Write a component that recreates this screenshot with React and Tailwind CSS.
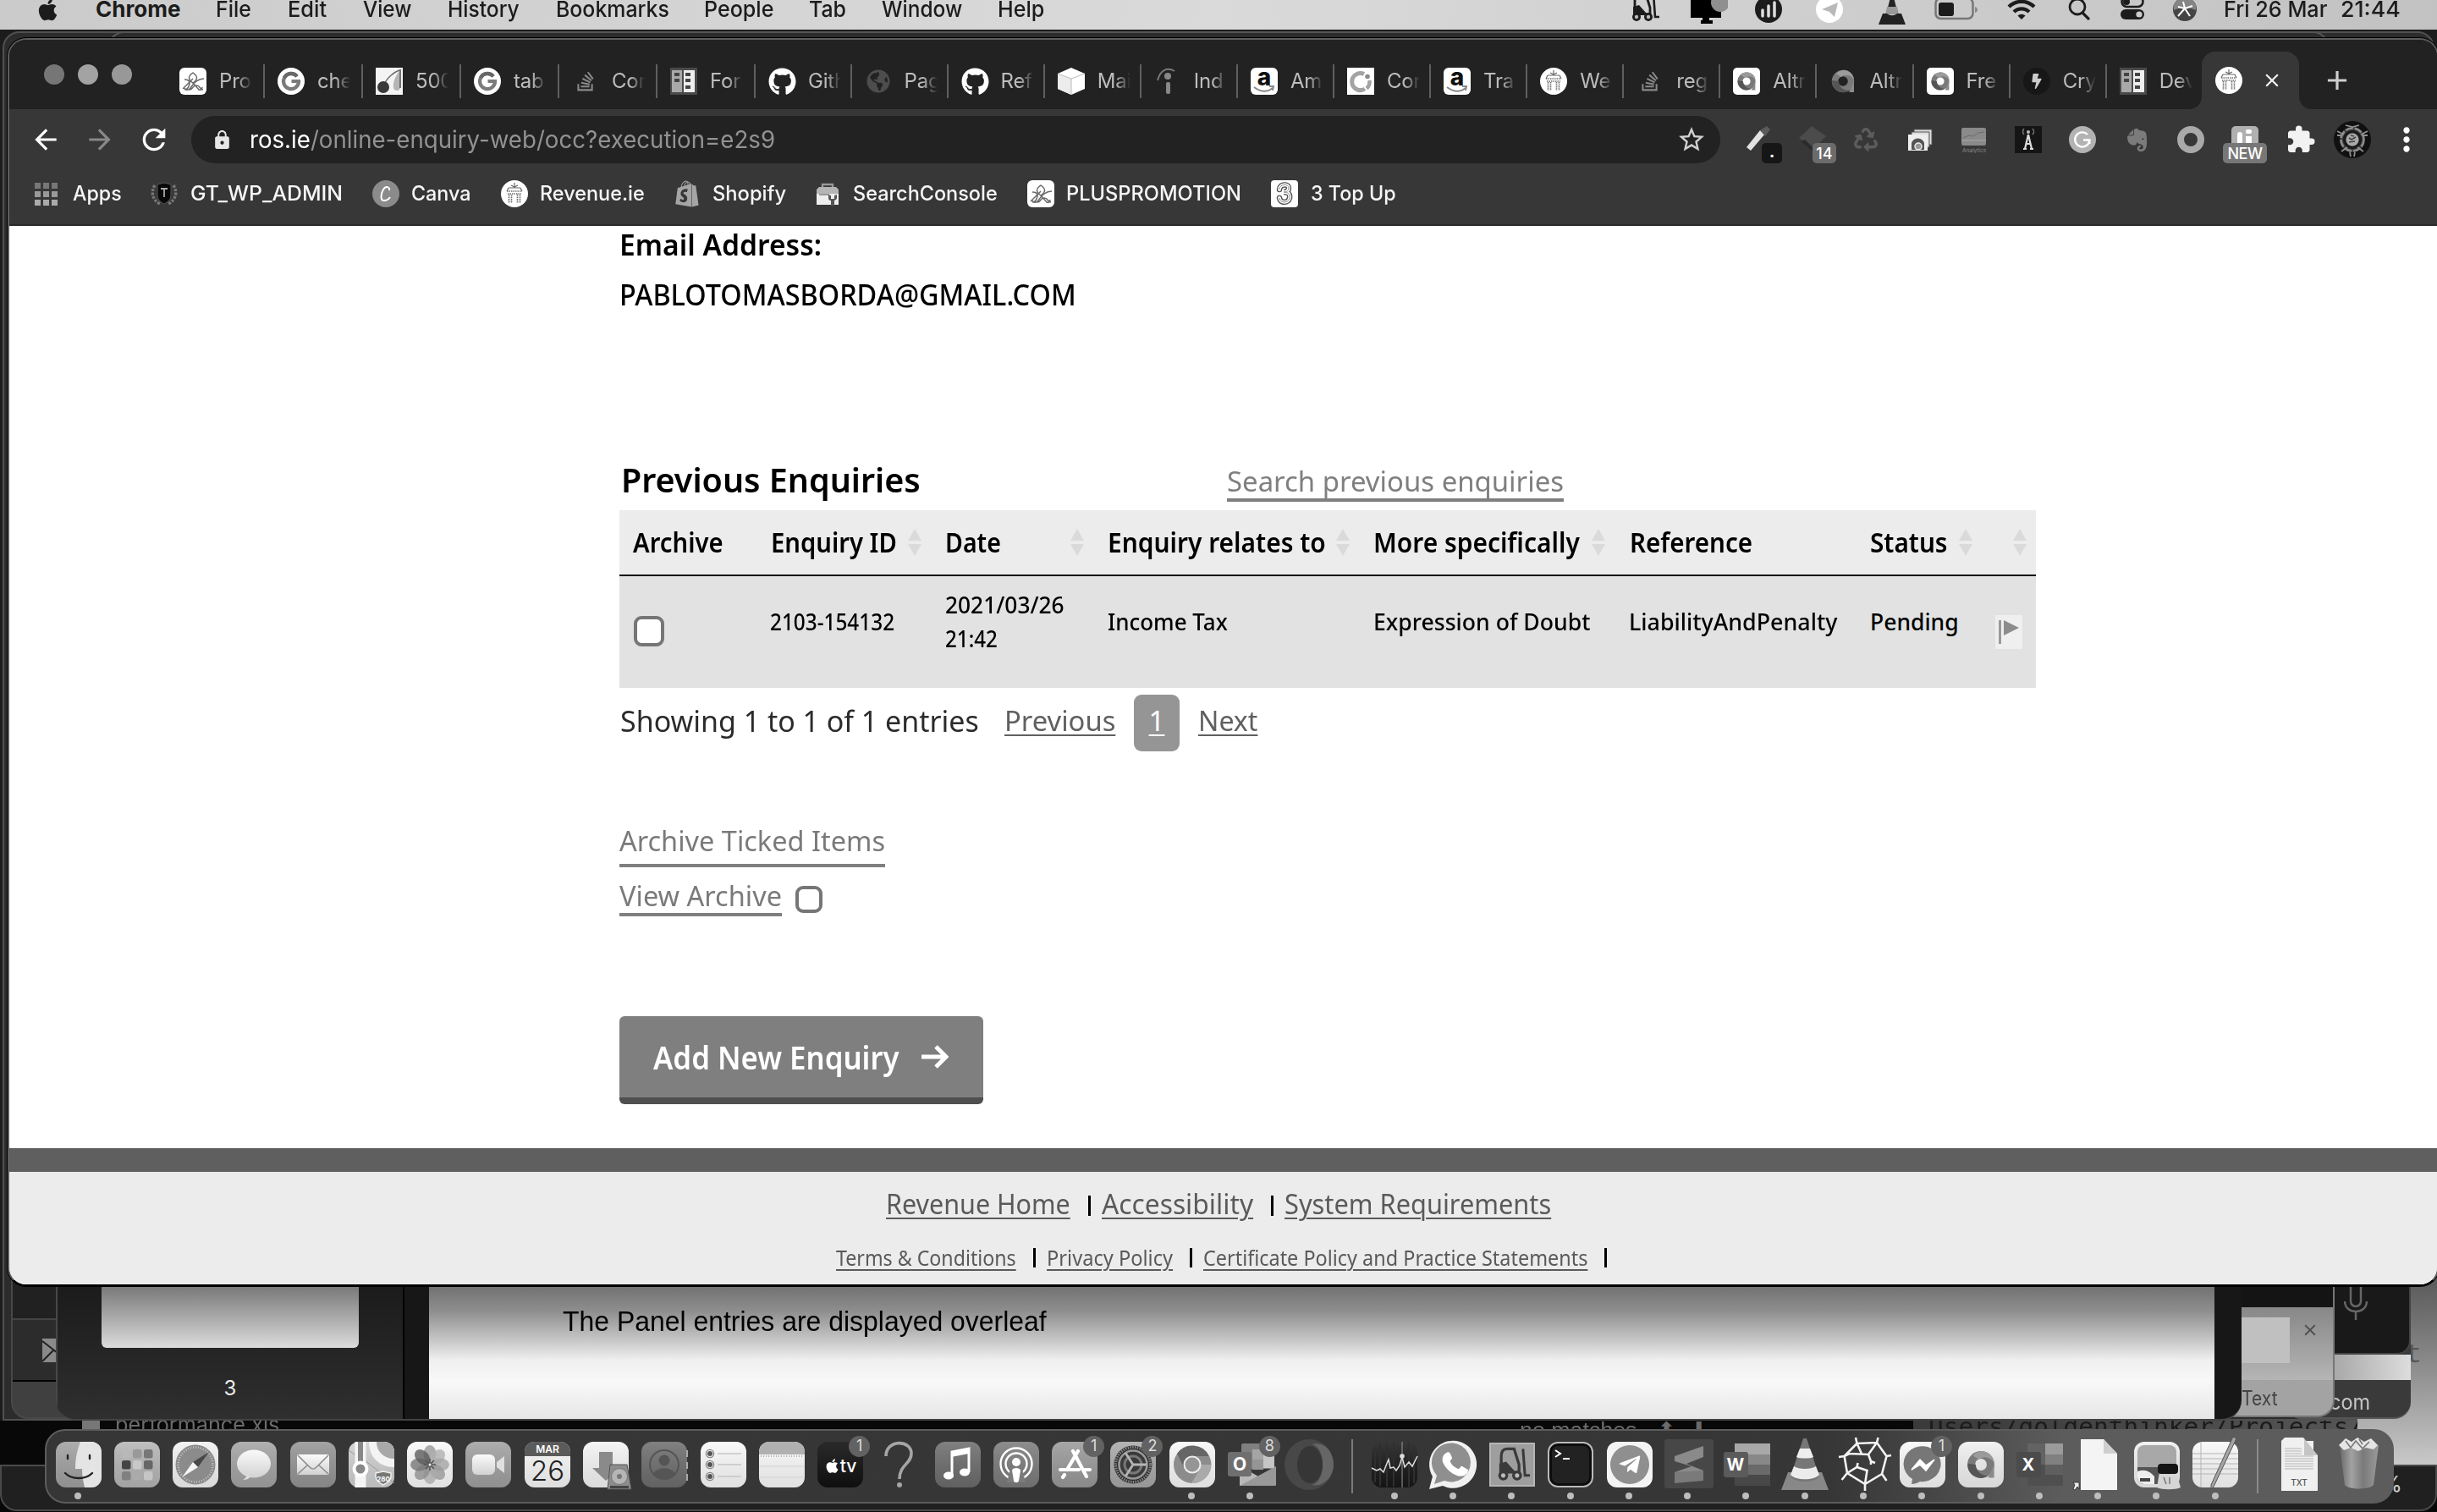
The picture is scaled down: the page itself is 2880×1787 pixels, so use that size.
import React, { useLayoutEffect, useRef, useState } from "react";
import { FaApple, FaGithub, FaStackOverflow, FaTelegramPlane, FaEvernote, FaRecycle, FaShopify, FaBolt, FaGlobeAmericas, FaMusic } from "react-icons/fa";
import { MdArrowBack, MdArrowForward, MdRefresh, MdLock, MdStarBorder, MdExtension, MdMoreVert, MdClose, MdAdd, MdWifi } from "react-icons/md";

/* Text run stretched horizontally to a given width. */
function Fit({ w, className = "", line = "", children }) {
  const ref = useRef(null);
  const [s, setS] = useState(1);
  useLayoutEffect(() => {
    if (ref.current && ref.current.offsetWidth) setS(w / ref.current.offsetWidth);
  }, [w]);
  return (
    <span className={"block shrink-0 whitespace-pre " + className} style={{ width: w }}>
      <span ref={ref} className={"inline-block origin-left whitespace-pre align-top " + line} style={{ transform: `scaleX(${s})` }}>
        {children}
      </span>
    </span>
  );
}
const UL = "underline decoration-2 underline-offset-4";

const Svg = ({ w = 32, h = 32, vb = "0 0 32 32", className = "", children }) => (
  <svg width={w} height={h} viewBox={vb} fill="none" className={"block shrink-0 " + className}>
    {children}
  </svg>
);

/* ---------- favicons ---------- */
const Knot = () => (
  <Svg>
    <rect width="32" height="32" rx="6" fill="#fff" />
    <path d="M16 6c6 4 6 8 0 12-6-4-6-8 0-12z" stroke="#6a6a6a" strokeWidth="1.5" />
    <path d="M4 25l12-12M6 26c3 0 5-3 6-7s-3-5-6-5M16 18l7 8c2 1 4-1 4-3M29 13c-7 0-11 4-16 11-2 3-6 3-7 0M12 26c4 0 3-5 8-5s4 5 8 5" stroke="#6a6a6a" strokeWidth="1.5" />
  </Svg>
);
const Google = () => (
  <Svg>
    <circle cx="16" cy="16" r="16" fill="#fff" />
    <path d="M23 10.500A9 9 0 1 0 25 16h-8.500" stroke="#7b7b7b" strokeWidth="4.2" />
    <path d="M8 12A9 9 0 0 1 23 10" stroke="#686868" strokeWidth="4.2" />
  </Svg>
);
const Cherry = () => (
  <Svg>
    <rect width="32" height="32" fill="#f4f4f4" />
    <path d="M28 3C22 5 13 12 10 20" stroke="#666" strokeWidth="1.4" />
    <circle cx="9" cy="23" r="7" fill="#3a3a3a" />
    <path d="M28 4c-6 7-9 17-6 22 3 2 7 1 7-3z" fill="#b5b5b5" />
    <path d="M29 2v22" stroke="#555" strokeWidth="1.6" />
  </Svg>
);
const Books = () => (
  <Svg>
    <rect width="32" height="32" fill="#4a4a4a" />
    <path d="M2 3h12v26H2z" fill="#a9a9a9" />
    <path d="M16 3h13v26H16z" fill="#eee" />
    <path d="M5 6h6v4H5zM5 13h6v4H5zM18 6h6v4h-6zM18 13h6v4h-6zM18 21h6v4h-6z" fill="#444" />
  </Svg>
);
const Cube = () => (
  <Svg>
    <path d="M16 0l16 7v18l-16 7-16-7V7z" fill="#fff" />
    <path d="M0 7l16 6v19L0 25z" fill="#ececec" />
    <path d="M0 7l16 6 16-6M16 13v19" stroke="#bbb" strokeWidth="1" />
  </Svg>
);
const Indeed = () => (
  <Svg>
    <circle cx="16" cy="10" r="4" fill="#888" />
    <rect x="14" y="17" width="5" height="14" rx="2" fill="#888" />
    <path d="M4 15C7 3 15-1 24 4" stroke="#777" strokeWidth="2" />
  </Svg>
);
const Amz = () => (
  <Svg>
    <rect width="32" height="32" rx="6" fill="#fff" />
    <text x="16" y="21" textAnchor="middle" fontFamily="Inter, sans-serif" fontWeight="800" fontSize="28" fill="#111">a</text>
    <path d="M4 23c8 6 16 6 22 1M22 22l5 0-1 5" stroke="#8a8a8a" strokeWidth="2" />
  </Svg>
);
const Coin = () => (
  <Svg>
    <rect width="32" height="32" fill="#fff" />
    <path d="M20 7.500A10 10 0 1 0 21 25" stroke="#a3a3a3" strokeWidth="5" />
    <circle cx="24" cy="10.500" r="2.800" fill="#8a8a8a" />
    <path d="M26.500 15c.5 4-.5 7-3.500 9.500" stroke="#a3a3a3" strokeWidth="4.500" />
  </Svg>
);
const Revenue = () => (
  <Svg>
    <circle cx="16" cy="16" r="16" fill="#fff" />
    <path d="M16 3v6M12 6l4 2 4-2M9 9l-2 4M23 9l2 4M9 9h14" stroke="#6b6b6b" strokeWidth="1.2" />
    <path d="M7 13h18M8 16h16" stroke="#6b6b6b" strokeWidth="1.4" strokeDasharray="1.5 1" />
    <path d="M9.500 17v10M12.500 17v10M19.500 17v10M22.500 17v10" stroke="#6b6b6b" strokeWidth="1.6" strokeDasharray="1.6 .8" />
  </Svg>
);
const RingArt = () => (
  <>
    <circle cx="16" cy="16" r="9.500" stroke="#7a7a7a" strokeWidth="7.500" />
    <path d="M8 7a12 12 0 0 1 21 9c0-6-10-10-15-5z" fill="#9b9b9b" />
    <path d="M3 15a13 13 0 0 0 20 12c-6 0-12-4-12-11z" fill="#555" />
    <path d="M29 16v13h-6z" fill="#8a8a8a" />
  </>
);
const Ring = ({ bg }) => (
  <Svg>
    {bg && <rect width="32" height="32" rx="5" fill="#fff" />}
    <g transform={bg ? "translate(16 16) scale(.8) translate(-16 -16)" : undefined}><RingArt /></g>
  </Svg>
);
const Bolt = () => (
  <span className="flex h-8 w-8 items-center justify-center rounded-full bg-[#171717]">
    <FaBolt size={18} color="#ccc" />
  </span>
);
const Stack = () => (
  <span className="flex h-8 w-8 items-center justify-center">
    <FaStackOverflow size={26} color="#8a8a8a" />
  </span>
);
const Git = () => <FaGithub size={33} color="#fff" />;
const Globe = () => (
  <span className="flex h-8 w-8 items-center justify-center">
    <FaGlobeAmericas size={28} color="#4d4d4d" />
  </span>
);

const TABS = [
  [Knot, "Pro", 116], [Google, "che", 116], [Cherry, "500", 116], [Google, "tab", 116], [Stack, "Cor", 116], [Books, "For", 116],
  [Git, "Gith", 113.5], [Globe, "Pag", 114.1], [Git, "Ref", 114.1], [Cube, "Mai", 114.1], [Indeed, "Ind", 114.1], [Amz, "Am", 114.1],
  [Coin, "Cor", 114.1], [Amz, "Tra", 114.1], [Revenue, "We", 114.1], [Stack, "reg", 114.1], [() => <Ring bg />, "Altr", 114.1],
  [() => <Ring />, "Altr", 114.1], [() => <Ring bg />, "Fre", 114.1], [Bolt, "Cry", 114.1], [Books, "Dev", 112.5],
];

function TabStrip() {
  return (
    <div className="flex h-[82px] items-end bg-[#222222]">
      <div className="ml-[41px] flex w-[145px] gap-4 pb-[29px]">
        <i className="h-6 w-6 rounded-full bg-[#767676]" />
        <i className="h-6 w-6 rounded-full bg-[#a3a3a3]" />
        <i className="h-6 w-6 rounded-full bg-[#989898]" />
      </div>
      {TABS.map(([Icon, label, w], i) => (
        <div key={i} className="flex h-[68px] shrink-0 items-start" style={{ width: w }}>
          <div className="mt-[15px] flex h-10 w-full items-center pl-[15px]">
            <span className="w-8 shrink-0"><Icon /></span>
            <span className="ml-[15px] w-[39px] overflow-hidden whitespace-nowrap text-[24px] leading-10 tracking-[-0.2px] text-[#bdbdbd] [mask-image:linear-gradient(90deg,#000_55%,transparent)]">{label}</span>
            {i < TABS.length - 1 && <span className="ml-auto h-10 w-[2px] bg-[#5f5f5f]" />}
          </div>
        </div>
      ))}
      <div className="relative flex h-[68px] w-[115px] items-start rounded-t-2xl bg-[#373737] pt-[18px] pl-4">
        <Svg w={16} h={16} vb="0 0 16 16" className="absolute bottom-0 -left-4"><path d="M16 0v16H0c10 0 16-6 16-16z" fill="#373737" /></Svg>
        <Svg w={16} h={16} vb="0 0 16 16" className="absolute -right-4 bottom-0"><path d="M0 0v16h16C6 16 0 10 0 0z" fill="#373737" /></Svg>
        <Revenue />
        <MdClose size={26} color="#f2f2f2" className="mt-[3px] ml-[22px]" />
      </div>
      <MdAdd size={38} color="#cfcfcf" className="mb-[15px] ml-[26px]" />
    </div>
  );
}

/* ---------- toolbar ---------- */
function Extensions() {
  return (
    <>
      <span className="relative ml-[29px] h-8 w-8">
        <Svg><path d="M2 25L18 5l6 4L7 29z" fill="#e2e2e2" /><path d="M18 5l8-5 4 4-6 8z" fill="#5a5a5a" /></Svg>
        <b className="absolute top-5 left-5 flex h-6 w-6 justify-center rounded-[5px] bg-[#161616] text-[20px] leading-5 text-white">.</b>
      </span>
      <span className="relative ml-8 h-8 w-8">
        <Svg><path d="M15 0l17 12-15 15L0 14z" fill="#4b4b4b" /><path d="M2 18l5-2 12 12v4z" fill="#2b2b2b" /></Svg>
        <span className="absolute top-5 left-4 flex h-6 w-7 justify-center rounded-[5px] bg-[#6b6b6b] text-[18px] leading-[26px] font-medium text-white">14</span>
      </span>
      <span className="ml-[31px] flex h-8 w-8 items-center justify-center"><FaRecycle size={28} color="#5c5c5c" /></span>
      <Svg className="ml-8">
        <path d="M9 4h21v18H9z" fill="#ddd" stroke="#555" /><path d="M6 7h21v18H6z" fill="#ddd" stroke="#555" /><path d="M2 10h23v19H2z" fill="#eee" />
        <path d="M6 28v-7a7 6 0 0 1 15 0v7" fill="#555" /><circle cx="14" cy="24" r="4" fill="#999" stroke="#eee" strokeWidth="1.500" />
      </Svg>
      <Svg className="ml-8">
        <rect x="1" y="2" width="29" height="21" rx="2" fill="#8a8a8a" /><path d="M3 14l7-3 5 1 6-4 7-1" stroke="#6b6b6b" /><path d="M1 17h29" stroke="#aaa" />
        <text x="16" y="31" textAnchor="middle" fontSize="6.500" fill="#8a8a8a" fontFamily="Inter">Analytics</text>
      </Svg>
      <Svg className="ml-8">
        <rect width="32" height="32" fill="#151515" /><circle cx="16" cy="7" r="2" fill="#bbb" /><path d="M11 3c-2 2-2 5 0 7M21 3c2 2 2 5 0 7" stroke="#777" strokeWidth="1.500" />
        <path d="M16 10l-4 17M16 10l4 17M10 27h4M18 27h4M13 21h6" stroke="#ddd" strokeWidth="2.200" />
      </Svg>
      <Svg className="ml-8">
        <circle cx="16" cy="16" r="16" fill="#b3b3b3" /><path d="M22 10a8.600 8.600 0 1 0 2.400 6.500H17M24.300 16.500V21" stroke="#fff" strokeWidth="2.400" />
      </Svg>
      <span className="ml-8 flex h-8 w-8 items-center justify-center"><FaEvernote size={31} color="#7b7b7b" /></span>
      <Svg className="ml-8"><circle cx="16" cy="16" r="12" stroke="#a9a9a9" strokeWidth="8" /></Svg>
      <span className="relative ml-8 h-8 w-8">
        <Svg><rect width="32" height="32" rx="5" fill="#b0b0b0" /><rect x="7" y="7" width="6" height="18" rx="3" fill="#fff" /><rect x="17" y="12" width="7" height="12" fill="#fff" /><rect x="17" y="4" width="7" height="5" rx="2" fill="#fff" /></Svg>
        <span className="absolute top-5 -left-[10px] flex h-6 w-[52px] justify-center rounded-[5px] bg-[#777777] text-[18px] leading-[26px] font-medium tracking-tight text-white">NEW</span>
      </span>
      <MdExtension size={36} color="#f2f2f2" className="ml-8 shrink-0" />
      <Svg w={44} h={44} vb="0 0 44 44" className="ml-[21px]">
        <circle cx="22" cy="22" r="22" fill="#101010" /><circle cx="22" cy="22" r="15" fill="#3d3d3d" /><circle cx="22" cy="22" r="13.500" stroke="#8b8b8b" strokeWidth="2.500" strokeDasharray="9 2" /><circle cx="22" cy="22" r="9.500" stroke="#1a1a1a" strokeWidth="3" />
        <circle cx="22" cy="22" r="7.500" fill="#a9a9a9" /><path d="M4 12l8 4M4 17h6M40 12l-8 4M40 17h-6M9 36l7-5M35 36l-7-5M19 37l1 5M25 37l-1 5M14 5l8 2 8-2" stroke="#8f8f8f" strokeWidth="1.800" /><path d="M18 20l3 2 5-3M18 25l7-1M20 17l4 1" stroke="#444" strokeWidth="1.600" />
      </Svg>
      <MdMoreVert size={44} color="#fff" className="ml-5 shrink-0" />
    </>
  );
}

function Toolbar() {
  return (
    <div className="flex h-[72px] items-center bg-[#373737]">
      <MdArrowBack size={38} color="#fff" className="ml-6 shrink-0" />
      <MdArrowForward size={38} color="#888" className="ml-[26px] shrink-0" />
      <MdRefresh size={40} color="#fff" className="ml-[25px] shrink-0" />
      <div className="ml-6 flex h-14 w-[1807px] shrink-0 items-center rounded-full bg-[#222222] pr-4 pl-6">
        <MdLock size={25} color="#e6e6e6" className="shrink-0" />
        <Fit w={621} className="ml-5 text-[28px] leading-[54px] text-[#929292]"><span className="text-white">ros.ie</span>/online-enquiry-web/occ?execution=e2s9</Fit>
        <MdStarBorder size={36} color="#d0d0d0" className="ml-auto shrink-0" />
      </div>
      <Extensions />
    </div>
  );
}

const AppsGrid = () => (
  <Svg w={28} h={28} vb="0 0 28 28">
    {[0, 1, 2].map((r) => [0, 1, 2].map((c) => <rect key={r + "-" + c} x={1 + c * 10} y={1 + r * 10} width="7" height="7" fill={["#777", "#999", "#aaa"][r]} />))}
  </Svg>
);
const Shield = () => (
  <Svg>
    <path d="M5 6c-5 8-3 17 6 22M27 6c5 8 3 17-6 22" stroke="#777" strokeWidth="3.500" strokeDasharray="3 1.500" />
    <path d="M8 5l8-2 8 2v12c0 6-4 9-8 11-4-2-8-5-8-11z" fill="#090909" stroke="#555" />
    <path d="M12 10h8M16 10v10" stroke="#aaa" strokeWidth="1.800" />
  </Svg>
);
const Canva = () => (
  <Svg>
    <circle cx="16" cy="16" r="16" fill="#8b8b8b" />
    <path d="M20 12c1-4-4-6-7-1s-4 13 1 13c3 0 5-1 7-4" stroke="#fff" strokeWidth="2" />
  </Svg>
);
const Console = () => (
  <Svg>
    <path d="M10 9V5h12v4" stroke="#999" strokeWidth="2.400" /><path d="M3 11l3-3h20l3 3v6H3z" fill="#b5b5b5" /><path d="M3 16h26v13H3z" fill="#eee" />
    <path d="M6 16h12v2H6z" fill="#999" /><path d="M17 17v4c0 3 3 3 3 3v6h4v-6s3-1 3-3v-4l-3 1v4h-4v-4z" fill="#555" />
  </Svg>
);
const THREE = "M10 11c0-7 11-7 11-2 0 4-3 5-6 5 5 0 8 2 7 7-1 6-11 7-12 0";
const Three = () => (
  <Svg>
    <rect width="32" height="32" rx="4" fill="#fff" />
    <path d={THREE} stroke="#555" strokeWidth="6.500" strokeLinecap="round" />
    <path d={THREE} stroke="#fff" strokeWidth="3.800" strokeLinecap="round" />
    <path d={THREE} stroke="#888" strokeWidth="1" />
  </Svg>
);
const MARKS = [
  [AppsGrid, 28, "Apps", 18, 58, 34], [Shield, 32, "GT_WP_ADMIN", 15, 180, 35], [Canva, 32, "Canva", 14, 71, 35], [Revenue, 32, "Revenue.ie", 14, 124, 34],
  [() => <FaShopify size={32} color="#a5a5a5" />, 32, "Shopify", 14, 87, 33], [Console, 32, "SearchConsole", 14, 171, 35], [Knot, 32, "PLUSPROMOTION", 14, 207, 35], [Three, 32, "3 Top Up", 15, 101, 0],
];
function Bookmarks() {
  return (
    <div className="flex h-[66px] items-center border-b-2 border-[#292929] bg-[#373737] pb-2 pl-[29px]">
      {MARKS.map(([Icon, iw, t, g, w, after], i) => (
        <div key={i} className="flex items-center" style={{ marginRight: after }}>
          <span className="flex justify-center" style={{ width: iw, marginRight: g }}><Icon /></span>
          <Fit w={w} className="text-[24px] leading-10 font-[450] text-[#f6f6f6]">{t}</Fit>
        </div>
      ))}
    </div>
  );
}

/* ---------- page ---------- */
const Sort = () => (
  <Svg w={16} h={32} vb="0 0 16 32"><path d="M8 0l8 14H0zM8 32l8-14H0z" fill="#dadada" /></Svg>
);
const Head = ({ t, w, tw, sort, pr = 29 }) => (
  <div className="flex h-[76px] shrink-0 items-center justify-between" style={{ width: w, paddingRight: pr }}>
    <Fit w={tw} className="-ml-px text-[32px] leading-[74px] font-semibold">{t}</Fit>
    {sort && <Sort />}
  </div>
);
const Cell = ({ t, w, tw }) => (
  <div className="shrink-0 pt-[34px]" style={{ width: w }}>
    <Fit w={tw} className="-ml-px text-[26.500px] leading-10 font-medium">{t}</Fit>
  </div>
);
const Check = ({ className = "" }) => <span className={"block rounded-[9px] border-[4px] border-[#767676] bg-white " + className} />;

function Page() {
  return (
    <div className="h-[1251px] overflow-hidden bg-white font-['Noto_Sans',sans-serif] text-black">
      <div className="ml-[721px] h-[1090px]">
        <Fit w={239} className="text-[35px] leading-[44px] font-semibold">Email Address:</Fit>
        <Fit w={540} className="mt-[15px] text-[35px] leading-[44px] font-medium">PABLOTOMASBORDA@GMAIL.COM</Fit>
        <div className="mt-[167px] flex h-[60px] pl-[2px]">
          <Fit w={354} className="text-[40px] leading-[60px] font-semibold">Previous Enquiries</Fit>
          <Fit w={398} className="mt-[1px] ml-[362px] h-[55px] border-b-[4px] border-[#7f7f7f] text-[33px] leading-[61px] text-[#7f7f7f]">Search previous enquiries</Fit>
        </div>
        <div className="mt-[6px] w-[1674px]">
          <div className="flex border-b-2 border-[#111] bg-[#ececec] pl-[17px]">
            <Head t="Archive" w={163} tw={107} />
            <Head t="Enquiry ID" w={206} tw={149} sort />
            <Head t="Date" w={192} tw={66} sort />
            <Head t="Enquiry relates to" w={314} tw={258} sort />
            <Head t="More specifically" w={303} tw={244} sort pr={30} />
            <Head t="Reference" w={284} tw={145} />
            <Head t="Status" w={150} tw={92} sort pr={30} />
            <div className="flex items-center pl-[18px]"><Sort /></div>
          </div>
          <div className="flex h-[132px] bg-[#e2e2e2] pl-[17px]">
            <div className="w-[162px] pt-[47px]"><Check className="h-9 w-9" /></div>
            <Cell t="2103-154132" w={206} tw={147} />
            <div className="w-[193px] pt-[14px] text-[26.500px] leading-10 font-medium">
              <Fit w={141}>2021/03/26</Fit>
              <Fit w={62}>21:42</Fit>
            </div>
            <Cell t="Income Tax" w={314} tw={142} />
            <Cell t="Expression of Doubt" w={302} tw={256} />
            <Cell t="LiabilityAndPenalty" w={285} tw={246} />
            <Cell t="Pending" w={147} tw={105} />
            <div className="mt-[46px] h-10 w-8 bg-[#efefef]">
              <Svg w={32} h={40} vb="0 0 32 40"><path d="M4 6h3v28H4z" fill="#999" /><path d="M10 6l18 9-18 9z" fill="#8c8c8c" /></Svg>
            </div>
          </div>
        </div>
        <div className="mt-2 flex h-[67px] items-center">
          <Fit w={424} className="mb-[6px] ml-px text-[35px] leading-[44px] text-[#2b2b2b]">Showing 1 to 1 of 1 entries</Fit>
          <Fit w={131} line={UL} className="mb-[6px] ml-[30px] text-[33px] leading-[44px] text-[#606060]">Previous</Fit>
          <span className="ml-[22px] flex h-[67px] w-[54px] items-center justify-center rounded-[9px] bg-[#959595] pb-[5px] text-[33px] leading-[44px] text-white underline decoration-2 underline-offset-4">1</span>
          <Fit w={70} line={UL} className="mb-[6px] ml-[22px] text-[33px] leading-[44px] text-[#606060]">Next</Fit>
        </div>
        <Fit w={314} className="mt-20 h-[57px] border-b-[4px] border-[#7f7f7f] text-[33px] leading-[51px] text-[#7a7a7a]">Archive Ticked Items</Fit>
        <div className="mt-2 flex">
          <Fit w={192} className="h-[50px] border-b-[4px] border-[#7f7f7f] text-[33px] leading-[51px] text-[#7a7a7a]">View Archive</Fit>
          <Check className="mt-[14px] ml-4 h-8 w-8" />
        </div>
        <div className="mt-[118px] flex h-[104px] w-[430px] items-center rounded-[6px] border-b-[8px] border-[#4f4f4f] bg-[#7f7f7f] pl-10">
          <Fit w={291} className="text-[38px] leading-[60px] font-semibold text-white">Add New Enquiry</Fit>
          <Svg w={32} h={30} vb="0 0 32 30" className="ml-[26px]"><path d="M0 15h28M17 3l12 12-12 12" stroke="#fff" strokeWidth="5" /></Svg>
        </div>
      </div>
      <div className="h-7 bg-[#5f5f5f]" />
      <div className="h-[133px] bg-[#ececec] pt-[13px] text-[#5a5a5a]">
        <div className="ml-[1036px] flex items-center text-[33px] leading-[50px]">
          <Fit w={218} line={UL}>Revenue Home</Fit>
          <i className="mt-1 ml-[21px] h-6 w-[3px] bg-black" />
          <Fit w={179} line={UL} className="ml-[13px]">Accessibility</Fit>
          <i className="mt-1 ml-[21px] h-6 w-[3px] bg-black" />
          <Fit w={315} line={UL} className="ml-[13px]">System Requirements</Fit>
        </div>
        <div className="mt-[18px] ml-[977px] flex items-center text-[26px] leading-10">
          <Fit w={213} line={UL}>Terms &amp; Conditions</Fit>
          <i className="ml-[20px] h-[23px] w-[3px] bg-black" />
          <Fit w={149} line={UL} className="ml-[13px]">Privacy Policy</Fit>
          <i className="ml-[20px] h-[23px] w-[3px] bg-black" />
          <Fit w={454} line={UL} className="ml-[13px]">Certificate Policy and Practice Statements</Fit>
          <i className="ml-[20px] h-[23px] w-[3px] bg-black" />
        </div>
      </div>
    </div>
  );
}

/* ---------- menu bar ---------- */
const Forklift = ({ w = 36, c = "#1c1c1c" }) => (
  <Svg w={w} h={w} vb="0 0 36 36">
    <path d="M7 24V10c0-5 2-8 6-8h7l5 16v9" stroke={c} strokeWidth="2.800" /><path d="M5 17l7-2 8 9 6 3H5z" fill={c} /><path d="M29 2l2 27h5" stroke={c} strokeWidth="2.600" />
    <circle cx="9" cy="29" r="5" fill={c} /><circle cx="23" cy="29" r="5" fill={c} /><circle cx="9" cy="29" r="2.200" fill="#bbb" /><circle cx="23" cy="29" r="2.200" fill="#bbb" />
  </Svg>
);
const MENU = [["File", 42, 43], ["Edit", 46, 43], ["View", 57, 43], ["History", 85, 43], ["Bookmarks", 134, 41], ["People", 82, 42], ["Tab", 44, 42], ["Window", 95, 42], ["Help", 55, 0]];
function MenuBar() {
  return (
    <div className="flex h-[35px] items-start bg-linear-to-r from-[#cbcbcb] via-[#dadada] to-[#c2c2c2] text-[26px] leading-[22px] font-[450] text-[#1c1c1c]">
      <FaApple size={29} className="-mt-[3px] ml-[42px] shrink-0" />
      <Fit w={101} className="mr-[41px] ml-[42px] font-bold">Chrome</Fit>
      {MENU.map(([t, w, g]) => (
        <span key={t} style={{ marginRight: g }}><Fit w={w}>{t}</Fit></span>
      ))}
      <span className="-mt-[9px] ml-[691px]"><Forklift /></span>
      <Svg w={44} h={28} vb="0 0 44 28" className="ml-[37px]"><path d="M0 0h27l9 14v7H0z" fill="#000" /><path d="M14 20h8v4h4v4H12v-4h2z" fill="#000" /><circle cx="35" cy="3" r="11" fill="#8f8f8f" /></Svg>
      <Svg className="-mt-[5px] ml-8"><circle cx="16" cy="16" r="16" fill="#1c1c1c" /><path d="M9 17v7M16 12v12M23 8v16" stroke="#ddd" strokeWidth="3.500" strokeLinecap="round" /></Svg>
      <Svg className="-mt-[5px] ml-10"><circle cx="16" cy="16" r="16" fill="#fff" /><path d="M7 16L26 8l-4 17-6-6z" fill="#b9b9b9" /></Svg>
      <Svg className="-mt-[3px] ml-[42px]"><path d="M14 0h4l3 12H11z" fill="#222" /><path d="M10 11h12l2 9H8z" fill="#999" /><path d="M5 19h5c4 3 8 3 12 0h5l5 13H0z" fill="#222" /></Svg>
      <Svg w={52} h={26} vb="0 0 52 26" className="ml-[34px]"><rect x="1.500" y="-2" width="44" height="24" rx="6" stroke="#777" strokeWidth="2.500" /><rect x="5" y="3" width="18" height="16" rx="3" fill="#1c1c1c" /><path d="M48 8c4 1 4 6 0 7z" fill="#888" /></Svg>
      <MdWifi size={36} className="-mt-[7px] ml-[33px] shrink-0" />
      <Svg w={26} h={26} vb="0 0 26 26" className="-mt-[2px] ml-[37px]"><circle cx="11" cy="10" r="9" stroke="#1c1c1c" strokeWidth="2.800" /><path d="M17 17l8 8" stroke="#1c1c1c" strokeWidth="3.200" /></Svg>
      <Svg w={28} h={26} vb="0 0 28 26" className="-mt-[2px] ml-9"><rect x="1.500" y="-2" width="25" height="12" rx="6" stroke="#1c1c1c" strokeWidth="2.500" /><circle cx="7" cy="4" r="4" fill="#1c1c1c" /><rect y="13" width="28" height="12" rx="6" fill="#1c1c1c" /><circle cx="22" cy="19" r="3.600" fill="#ccc" /></Svg>
      <Svg w={28} h={28} vb="0 0 28 28" className="-mt-[3px] ml-[34px]"><circle cx="14" cy="14" r="14" fill="#444" /><path d="M1 9c6-12 20-12 26 0v6c-8-4-18-4-26 0z" fill="#858585" /><path d="M14 13L6 22M14 13l6 9M14 13l9-3M14 13L12 5M14 13L6 11" stroke="#fff" strokeWidth="2" /></Svg>
      <Fit w={122} className="ml-8">Fri 26 Mar</Fit>
      <Fit w={71} className="ml-4">21:44</Fit>
    </div>
  );
}

/* ---------- dock ---------- */
const Defs = () => (
  <svg width="0" height="0" className="absolute">
    <linearGradient id="sheen" x1="0" y1="0" x2="0" y2="1"><stop offset="0" stopColor="#fff" stopOpacity=".14" /><stop offset="1" stopColor="#000" stopOpacity=".1" /></linearGradient>
    <linearGradient id="bubble" x1="0" y1="0" x2="0" y2="1"><stop offset="0" stopColor="#fafafa" /><stop offset="1" stopColor="#d2d2d2" /></linearGradient>
    <linearGradient id="can" x1="0" y1="0" x2="1" y2="0"><stop offset="0" stopColor="#6a6a6a" /><stop offset=".3" stopColor="#a2a2a2" /><stop offset=".6" stopColor="#7a7a7a" /><stop offset="1" stopColor="#9a9a9a" /></linearGradient>
  </svg>
);
const D = ({ children, fill = "#aaa", bare }) => (
  <Svg w={56} h={58} vb="-1 -2 56 58" className="overflow-visible">
    {!bare && <rect width="54" height="54" rx="12" fill={fill} />}
    {!bare && <rect width="54" height="54" rx="12" fill="url(#sheen)" />}
    {children}
  </Svg>
);
const Glyph = ({ x = 27, y = 36, s = 26, c = "#fff", w = 700, children }) => (
  <text x={x} y={y} textAnchor="middle" fontFamily="Inter, sans-serif" fontWeight={w} fontSize={s} fill={c}>{children}</text>
);
const Bg = ({ t, children }) => (
  <span className="relative block">
    {children}
    <span className="absolute -top-[5px] -right-[7px] flex h-[25px] w-[25px] items-center justify-center rounded-full bg-[#626262] text-[18px] leading-none text-[#ddd]">{t}</span>
  </span>
);
const IconBox = ({ className, children }) => <span className={"flex h-[54px] w-[54px] items-center justify-center rounded-xl " + className}>{children}</span>;
const PETALS = ["#9a9a9a", "#b0b0b0", "#a5a5a5", "#999", "#aaa", "#8d8d8d", "#777", "#5d5d5d"];
const PADS = ["#b8b8b8", "#999", "#777", "#444", "#c8c8c8", "#666", "#808080", "#aaa", "#c5c5c5"];

const LEFT = [
  [<D fill="#a0a0a0"><path d="M29 0h13a12 12 0 0 1 12 12v30a12 12 0 0 1-12 12h-8c-2-8-3-14-3-22h-8C23 18 26 8 29 0z" fill="#e4e4e4" /><path d="M14 16v4M40 16v4M11 37c8 8 24 8 32 0" stroke="#222" strokeWidth="2.400" strokeLinecap="round" /></D>, 1],
  [<D fill="#b5b5b5">{[0, 1, 2].map((r) => [0, 1, 2].map((c) => <rect key={r * 3 + c} x={9 + c * 13} y={9 + r * 13} width="10.500" height="10.500" rx="2.500" fill={PADS[r * 3 + c]} />))}</D>],
  [<D fill="#f2f2f2"><circle cx="27" cy="27" r="23.500" fill="#8b8b8b" /><circle cx="27" cy="27" r="20.500" stroke="#c5c5c5" strokeDasharray="1 2" strokeWidth="2.500" /><path d="M43 12L30 30l-6-6z" fill="#484848" /><path d="M11 42l13-18 6 6z" fill="#f5f5f5" /></D>],
  [<D fill="#a3a3a3"><ellipse cx="27" cy="26" rx="20" ry="16.500" fill="url(#bubble)" /><path d="M19 39c-1 3-3 5-5 6 4 0 7-1 9-4z" fill="#dcdcdc" /></D>],
  [<D fill="#949494"><rect x="8" y="15" width="38" height="24" rx="2" fill="url(#bubble)" /><path d="M9 16l14 14c3 3 5 3 8 0l14-14M9 38l12-11M45 38L33 27" stroke="#8a8a8a" strokeWidth="1.500" /></D>],
  [<D fill="#cfcfcf"><path d="M24 0h18a12 12 0 0 1 12 12v18C36 30 24 18 24 0z" fill="#f4f4f4" /><path d="M33 0h9a12 12 0 0 1 12 12v8C42 20 33 12 33 0z" fill="#a8a8a8" /><path d="M19 22l35 27M0 10l10 7" stroke="#999" /><path d="M14 0v54" stroke="#f5f5f5" strokeWidth="13" /><path d="M14 0v54" stroke="#888" strokeWidth="6" /><path d="M14 34v20" stroke="#f5f5f5" strokeWidth="8" /><circle cx="14" cy="32" r="7.500" fill="#888" stroke="#fff" strokeWidth="4" /><path d="M32 37l9-2 9 2c1 8-3 11-9 14-6-3-10-6-9-14z" fill="#777" stroke="#eee" strokeWidth="1.500" /><Glyph x={41} y={47} s={8}>280</Glyph></D>],
  [<D fill="#fafafa">{[0, 45, 90, 135, 180, 225, 270, 315].map((a, i) => <ellipse key={a} cx="27" cy="14.500" rx="7.500" ry="10.500" transform={`rotate(${a} 27 27)`} fill={PETALS[i]} fillOpacity=".8" />)}<path d="M27 20v14M20 27h14M22 22l10 10M32 22L22 32" stroke="#555" strokeWidth="1.600" /><circle cx="27" cy="27" r="1.500" fill="#fff" /></D>],
  [<D fill="#a0a0a0"><rect x="8" y="15" width="27" height="24" rx="6" fill="url(#bubble)" /><path d="M37 24l9-7v20l-9-7z" fill="#e0e0e0" /></D>],
  [<D fill="#f7f7f7"><path d="M0 17v-5A12 12 0 0 1 12 0h30a12 12 0 0 1 12 12v5z" fill="#5b5b5b" /><Glyph y={13} s={12} w={600}>MAR</Glyph><Glyph y={46} s={33} c="#222" w={300}>26</Glyph></D>],
  [<D fill="#f4f4f4"><path d="M19 12h16v19h9L27 46 11 31h8z" fill="#8a8a8a" /><path d="M32 27h20l5 29H29z" fill="#8d8d8d" stroke="#555" /><circle cx="43" cy="41" r="9.500" fill="#b5b5b5" stroke="#777" /><circle cx="43" cy="41" r="3" fill="#777" /><path d="M32 52h22v3H32z" fill="#444" /></D>],
  [<D fill="#6d6d6d"><circle cx="27" cy="27" r="17" stroke="#555" strokeWidth="2" /><circle cx="27" cy="22" r="6.500" fill="#555" /><path d="M14 38c4-9 22-9 26 0-7 8-19 8-26 0z" fill="#555" /><path d="M54 10v8M54 24v8M54 38v8" stroke="#aaa" strokeWidth="2" /></D>],
  [<D fill="#fafafa">{[14, 27, 41].map((y) => <g key={y}><circle cx="11" cy={y} r="4.600" stroke="#888" strokeWidth="1.400" /><circle cx="11" cy={y} r="3" fill="#555" /><path d={`M20 ${y}h28`} stroke="#c8c8c8" strokeWidth="1.600" /></g>)}</D>],
  [<D fill="#fafafa"><path d="M0 15v-3A12 12 0 0 1 12 0h30a12 12 0 0 1 12 12v3z" fill="#b0b0b0" /><path d="M2 17h50" stroke="#777" strokeDasharray="1 2" /><path d="M0 29h54M0 42h54" stroke="#d2d2d2" /></D>],
  [<Bg t="1"><IconBox className="mx-px my-[2px] bg-linear-to-b from-[#2a2a2a] to-[#0f0f0f] pt-1 text-[21px] font-medium text-white"><FaApple size={19} />tv</IconBox></Bg>],
  [<D bare><path d="M12 17C12-3 42-3 42 14c0 12-14 13-14 30" stroke="#a5a5a5" strokeWidth="3.600" /><circle cx="28" cy="51" r="3" fill="#a5a5a5" /></D>],
  [<D fill="#6c6c6c"><path d="M20 42V12l20-4v28" stroke="#fff" strokeWidth="3" /><path d="M19 12l21-4v6l-21 4z" fill="#fff" /><ellipse cx="16" cy="40" rx="6" ry="4.500" fill="#fff" /><ellipse cx="35" cy="36" rx="6" ry="4.500" fill="#fff" /></D>],
  [<D fill="#7b7b7b"><circle cx="27" cy="26" r="18.500" stroke="#fff" strokeWidth="2.400" /><circle cx="27" cy="26" r="12.500" stroke="#fff" strokeWidth="2.400" /><path d="M20 32h14l4 16H16z" fill="#7b7b7b" /><circle cx="27" cy="24" r="5" fill="#fff" /><path d="M22 34c0-4 10-4 10 0l-2 12c-1 3-5 3-6 0z" fill="#fff" /></D>],
  [<Bg t="1"><D fill="#999"><path d="M31 11L18 33M25 11l16 30M10 33h22M37 33h8M15 39l-2 3" stroke="#fff" strokeWidth="4.200" strokeLinecap="round" /></D></Bg>],
  [<Bg t="2"><D fill="#a8a8a8"><circle cx="27" cy="27" r="22.500" fill="#303030" /><circle cx="27" cy="27" r="20.500" stroke="#8a8a8a" strokeWidth="3" strokeDasharray="1.400 1.400" /><circle cx="27" cy="27" r="16.500" stroke="#999" strokeWidth="2.600" fill="#3a3a3a" /><circle cx="27" cy="27" r="10" stroke="#777" strokeWidth="3" /><path d="M27 27h16M27 27L18 13M27 27L18 41" stroke="#b5b5b5" strokeWidth="2.800" /></D></Bg>],
  [<D fill="#f8f8f8"><circle cx="27" cy="27" r="22" fill="#8c8c8c" /><path d="M27 17h20A22 22 0 0 0 9 14l9 18z" fill="#666" /><path d="M36 32l-10 17a22 22 0 0 0 21-32H30z" fill="#aaa" /><path d="M27 17h20a22 22 0 0 1 2 10H36z" fill="#8c8c8c" /><circle cx="27" cy="27" r="10.500" fill="#eee" /><circle cx="27" cy="27" r="8.500" fill="#959595" /></D>, 1],
  [<Bg t="8"><D bare><rect x="16" y="2" width="38" height="30" rx="2" fill="#808080" /><path d="M29 9h13v12H29z" fill="#a5a5a5" /><path d="M42 9h13v12H42zM29 21h13v12H29z" fill="#959595" /><path d="M42 9h13v22H42z" fill="#c5c5c5" /><path d="M14 28l22 13 21-12v21a2 2 0 0 1-2 2H14z" fill="#b8b8b8" /><path d="M14 52l43-23v21a2 2 0 0 1-2 2z" fill="#989898" /><rect x="0" y="12" width="28" height="29" rx="3" fill="#6f6f6f" /><Glyph x={14} y={34} s={21}>O</Glyph></D></Bg>, 1],
  [<D bare><ellipse cx="27" cy="27" rx="29" ry="30" fill="#484848" /><path d="M30 3c16-4 26 10 26 24S44 54 30 51c9-2 13-12 13-24S39 5 30 3z" fill="#666" /><ellipse cx="28" cy="27" rx="15" ry="22" fill="#363636" /></D>],
];
const Web = () => (
  <D bare><path d="M17-5l1.500 7L42 1l1.500-6M18.500 2L3.600 17l3.400 20 21 13 20-12 5.500-21L42 1M-3 18l6.600-1L9.600 14 32 15 42 1M18.500 2L24 14M32 15l3 8 5 2M35 23v4M53.500 17l5.500-1M48 38l5.500 8M28 50v8M7 37L.6 45M7 37l11.500-7 12 4L28 50M18.500 30l1-5" stroke="#f3f3f3" strokeWidth="2.600" /></D>
);
const RIGHT = [
  <D fill="#171717"><path d="M4 6v42M10 2v50M18 1v52M26 1v52M44 1v52M50 5v44" stroke="#2f2f2f" strokeWidth="2" /><path d="M36 0v54" stroke="#999" /><path d="M0 31l6 3 4-2 4 4 3-8 3-7 2 10 4-1 3 4 4-6 3-10 3 12 5-6 4 5 6-12" stroke="#ddd" strokeWidth="1.500" /><circle cx="36" cy="17" r="2.800" fill="#ddd" /></D>,
  <D bare><path d="M-2 56l4-15A28 28 0 1 1 14 52z" fill="#f0f0f0" /><path d="M4 50l3-10A23 23 0 1 1 16 46z" fill="#8f8f8f" /><path d="M17 14c5-4 6 0 8 5 0 2-3 3-2 5 2 4 5 6 9 8 3 0 3-4 5-3l7 4c0 7-8 9-13 7-8-3-14-9-17-16-1-4 0-8 3-10z" fill="#fff" /></D>,
  <span className="flex h-[52px] w-[54px] items-center justify-center border-2 border-[#b5b5b5] bg-[#9e9e9e]"><Forklift w={42} c="#3a3a3a" /></span>,
  <D fill="#111"><rect x="1" y="1" width="52" height="52" rx="11" fill="#0d0d0d" stroke="#bbb" strokeWidth="2" /><rect x="5" y="5" width="44" height="44" rx="7" fill="#222" /><path d="M9 10l6 4-6 4M18 20h8" stroke="#fff" strokeWidth="2" /></D>,
  <IconBox className="bg-[#f4f4f4]"><span className="flex h-[46px] w-[46px] items-center justify-center rounded-full bg-[#8f8f8f]"><FaTelegramPlane size={28} color="#fff" /></span></IconBox>,
  <D bare><rect x="-1" y="-3" width="58" height="58" rx="3" fill="#474747" /><path d="M11 17L45 5v13L25 26l20 8v11L11 48V36l20-7-20-6z" fill="#8a8a8a" /><path d="M11 36l34-2v12L11 49z" fill="#7a7a7a" /></D>,
  <D bare><path d="M13 2h42v50H13z" fill="#6a6a6a" /><path d="M13 2h42v13H13z" fill="#a8a8a8" /><path d="M13 15h42v12H13z" fill="#888" /><path d="M13 39h42v13H13z" fill="#484848" /><rect y="12" width="29" height="30" rx="3" fill="#5b5b5b" /><Glyph x={14} y={34} s={20}>W</Glyph></D>,
  <D bare><path d="M7 36h40l8 21H-1z" fill="#888" /><path d="M25-4h4l15 45c-6 8-28 8-34 0z" fill="#777" /><path d="M21 8h12l4 10c-3 2-17 2-20 0z" fill="#eee" /><path d="M14 29c6 4 20 4 26 0l4 10c-6 7-28 7-34 0z" fill="#ececec" /></D>,
  <Web />,
  <Bg t="1"><D fill="#f8f8f8"><path d="M14 50l1-6A22 21 0 1 1 24 47c-3 2-7 3-10 3z" fill="#777" /><path d="M14 33l10-12 7 7 10-7-10 13-7-7z" fill="#fff" stroke="#fff" strokeWidth="1.500" /></D></Bg>,
  <D fill="#f0f0f0"><g transform="translate(27 27) scale(1.200) translate(-16 -16)"><RingArt /></g></D>,
  <D bare><path d="M13 2h42v50H13z" fill="#4f4f4f" /><path d="M13 2h21v25H13z" fill="#636363" /><path d="M34 2h21v13H34z" fill="#9b9b9b" /><path d="M34 15h21v12H34z" fill="#808080" /><path d="M34 27h21v12H34z" fill="#5f5f5f" /><rect y="12" width="29" height="30" rx="3" fill="#4b4b4b" /><Glyph x={14} y={34} s={20}>X</Glyph></D>,
  <D bare><path d="M6-3h27l16 17v43H6z" fill="#f4f4f4" /><path d="M33-3v17h16z" fill="#cfcfcf" /><path d="M-3 48h7v8l-2-3-3 4-2-1 2-5z" fill="#eee" stroke="#222" strokeWidth=".8" /></D>,
  <D fill="#f0f0f0"><rect x="4" y="4" width="46" height="46" rx="8" fill="#a8a8a8" /><path d="M4 30h46v12a8 8 0 0 1-8 8H12a8 8 0 0 1-8-8z" fill="#555" /><path d="M4 35c8-3 14-1 20 6v9H12a8 8 0 0 1-8-8z" fill="#eee" /><path d="M7 45h12" stroke="#444" strokeWidth="4" /><path d="M30 36h20l5 18c-6 3-22 3-28 0z" fill="#d5d5d5" /><path d="M35 42l3 8M42 42v8" stroke="#777" strokeWidth="1.500" /><rect x="28" y="26" width="24" height="12" rx="4" fill="#151515" /></D>,
  <D fill="#fafafa"><path d="M0 14h54M0 20h54M0 26h54M0 32h54M0 38h54M10 0v54" stroke="#b5b5b5" /><path d="M48-6l4 2-27 57-3 3v-5z" fill="#a5a5a5" stroke="#555" /></D>,
];
const DockCell = ({ dot, children }) => (
  <div className="relative flex h-[86px] w-[69.27px] shrink-0 items-center justify-center pb-[5px]">
    {children}
    {dot && <i className="absolute bottom-[4px] left-[30px] h-2 w-2 rounded-full bg-[#bdbdbd]" />}
  </div>
);
function Dock() {
  return (
    <div className="absolute top-[1689px] left-[53px] flex h-[88px] w-[2776px] items-center rounded-[24px] border-2 border-[#5c5c5c] bg-linear-to-r from-[#363636] from-76% to-[#5c5c5c] to-86% pl-[3px]">
      <Defs />
      {LEFT.map(([ic, dot], i) => <DockCell key={i} dot={dot}>{ic}</DockCell>)}
      <div className="flex w-8 shrink-0 justify-center"><i className="h-16 w-[2px] bg-[#7b7b7b]" /></div>
      {RIGHT.map((ic, i) => <DockCell key={i} dot>{ic}</DockCell>)}
      <div className="flex w-[30px] shrink-0 justify-center"><i className="h-16 w-[2px] bg-[#8b8b8b]" /></div>
      <DockCell>
        <D bare><path d="M6-1l4-4h22l3 4h9v12l5 5v42H6z" fill="#f0f0f0" /><path d="M33-4v20h16z" fill="#c5c5c5" />{[8, 11, 14, 17, 20, 23, 26, 29, 32].map((y) => <path key={y} d={`M10 ${y}h${y < 16 ? 20 : 34}`} stroke="#b5b5b5" />)}<Glyph y={52} s={10} c="#555" w={500}>TXT</Glyph></D>
      </DockCell>
      <DockCell>
        <D bare><path d="M5 4h46l-6 47c-5 6-29 6-34 0z" fill="url(#can)" /><path d="M4 4l8-8 7 4 7-5 8 5 8-4 8 8-5 5-9-2-9 4-9-4-8 3z" fill="#e5e5e5" /><path d="M12-1l6 8 6-8 8 9 8-8M28-3l4 6" stroke="#777" strokeWidth="1.600" /></D>
      </DockCell>
    </div>
  );
}

/* ---------- windows behind the browser ---------- */
function BackWindows() {
  return (
    <>
      <div className="absolute top-[35px] left-0 h-[1752px] w-[2880px] bg-[#1c1c1c]" />
      <div className="absolute top-[37px] left-[3px] h-[1642px] w-[2874px] rounded-t-[20px] border-2 border-[#505050] bg-[#2c2c2c]" />
      <div className="absolute top-[37px] left-[127px] h-[60px] w-[2626px] rounded-t-[20px] border-2 border-[#555] bg-[#2c2c2c]" />
      <div className="absolute top-[1679px] left-0 flex h-[108px] w-[2880px] items-start overflow-hidden bg-[#080808] text-[26px] leading-4 text-[#6b6b6b]">
        <i className="ml-[97px] h-4 w-[22px] bg-[#777]" />
        <Fit w={194} className="-mt-[3px] ml-[18px]">performance.xls</Fit>
        <Fit w={138} className="mt-[3px] ml-[1466px] font-['Liberation_Sans',sans-serif]">no matches</Fit>
        <span className="mt-[3px] ml-6 w-[310px] font-['DejaVu_Sans',sans-serif] whitespace-pre">⬆  ⬇</span>
        <span className="h-4 w-[633px] bg-linear-to-r from-[#3a3a3a] to-[#5a5a5a] pl-[18px] font-['DejaVu_Sans_Mono',monospace] text-[29px] leading-[14px] text-[#1c1c1c]"><Fit w={514}>Users/goldenthinker/Projects/</Fit></span>
      </div>
      <div className="absolute top-[1731px] left-0 h-[55px] w-[2880px] rounded-b-[20px] border-2 border-[#4a4a4a] bg-[#202020] text-right text-[26px] text-[#ccc]"><span className="mt-[1px] mr-[39px] inline-block">%</span></div>
      <div className="absolute top-[1500px] left-[2786px] h-[231px] w-[94px] bg-linear-to-b from-[#555] to-[#c9c9c9] pt-[78px] pl-[57px] font-['Liberation_Mono',monospace] text-[32px] text-[#555]">t</div>
      <div className="absolute top-[1500px] left-[2700px] flex h-[177px] w-[149px] flex-col overflow-hidden rounded-b-[20px] border-b-2 border-[#555] bg-[#3a3a3a]">
        <div className="flex h-[101px] shrink-0 justify-end rounded-br-2xl border-r-2 border-b-2 border-[#444] bg-[#191919] pr-[49px]">
          <Svg w={28} h={46} vb="0 0 28 46" className="mt-4"><rect x="8" y="-4" width="12" height="32" rx="6" stroke="#666" strokeWidth="2.500" /><path d="M1 22c0 16 26 16 26 0M14 34v10" stroke="#666" strokeWidth="2.500" /></Svg>
        </div>
        <div className="h-[30px] shrink-0 bg-linear-to-r from-[#888] to-[#ddd]" />
        <Fit w={48} className="mt-[10px] ml-[53px] text-[25px] leading-8 text-[#c5c5c5]">com</Fit>
      </div>
      <div className="absolute top-[1500px] left-[2600px] flex h-[175px] w-[159px] flex-col overflow-hidden rounded-b-[20px] border-r-2 border-b-2 border-[#777] bg-[#a3a3a3]">
        <div className="h-[45px] shrink-0 bg-[#141414]" />
        <div className="flex h-[86px] shrink-0 bg-linear-to-b from-[#888] to-[#b5b5b5] pt-3">
          <div className="ml-[49px] h-[54px] w-[57px] bg-[#c0c0c0]" />
          <MdClose size={22} color="#4d4d4d" className="mt-1 ml-[13px]" />
        </div>
        <Fit w={43} className="mt-[4px] ml-[49px] text-[24px] leading-9 text-[#444]">Text</Fit>
      </div>
      <div className="absolute top-[1500px] left-[13px] flex h-[177px] w-[120px] flex-col overflow-hidden rounded-b-[20px] border-2 border-[#484848] bg-[#404040]">
        <div className="h-[58px] shrink-0 border-b-2 border-[#444] bg-[#212121]" />
        <div className="flex h-[73px] shrink-0 items-center border-b-2 border-black bg-[#2c2c2c] pl-[35px]">
          <Svg w={36} h={28} vb="0 0 36 28"><path d="M0 0h36v28H0z" fill="#8a8a8a" /><path d="M0 3l18 14L36 3M0 27l13-13" stroke="#222" strokeWidth="2" /></Svg>
        </div>
      </div>
      <div className="absolute top-[1500px] left-[66px] flex h-[179px] w-[2583px] overflow-hidden rounded-b-[24px] border-b-2 border-[#444] bg-[#171717]">
        <div className="flex w-[412px] shrink-0 flex-col items-center border-r-2 border-l-2 border-r-black border-l-[#484848] bg-linear-to-b from-[#191919] to-[#2f2f2f]">
          <div className="h-[93px] w-[304px] shrink-0 rounded-b-[6px] bg-linear-to-b from-[#606060] to-[#dcdcdc]" />
          <span className="mt-[32px] text-[24px] leading-8 text-[#eee]">3</span>
        </div>
        <div className="ml-[29px] h-[179px] w-[2110px] shrink-0 bg-[linear-gradient(180deg,#6f6f6f_10%,#8f8f8f_28%,#c4c4c4_46%,#efefef_60%,#f8f8f8_74%,#e6e6e6_100%)] pt-[40px] pl-[158px] font-['Liberation_Sans',sans-serif] text-[33px] leading-[44px] text-black">
          <Fit w={572}>The Panel entries are displayed overleaf</Fit>
        </div>
      </div>
    </>
  );
}

export default function App() {
  return (
    <div className="relative h-[1787px] w-[2880px] overflow-hidden bg-[#1c1c1c] font-['Inter',sans-serif]">
      <MenuBar />
      <BackWindows />
      <div className="absolute top-[45px] left-[9px] w-[2873px] overflow-hidden rounded-[22px] border-2 border-[#5d5d5d] border-b-black bg-[#222] shadow-[0_0_0_1px_#000]">
        <TabStrip />
        <Toolbar />
        <Bookmarks />
        <Page />
      </div>
      <Dock />
    </div>
  );
}
